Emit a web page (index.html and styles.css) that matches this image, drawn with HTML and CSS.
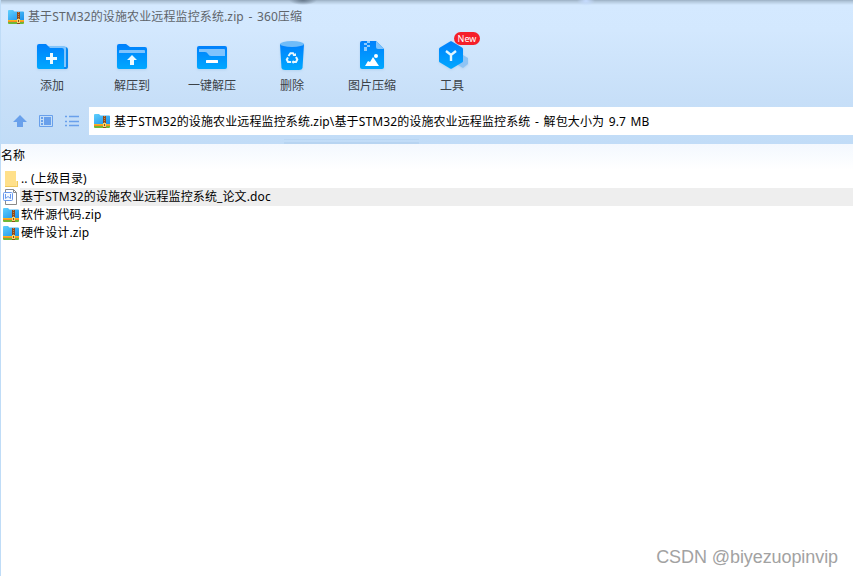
FILE: index.html
```html
<!DOCTYPE html>
<html lang="zh-CN">
<head>
<meta charset="utf-8">
<title>360压缩</title>
<link rel="stylesheet" href="styles.css">
</head>
<body>
<svg class="defs" width="0" height="0">
  <defs>
    <linearGradient id="blue" x1="0" y1="0" x2="0" y2="1"><stop offset="0" stop-color="#0080fc"/><stop offset="1" stop-color="#00a8ff"/></linearGradient>
    <linearGradient id="sky" x1="0" y1="0" x2="1" y2="1"><stop offset="0" stop-color="#5fd0fd"/><stop offset="1" stop-color="#1c90ea"/></linearGradient>
    <symbol id="zip" viewBox="0 0 16 14">
      <path d="M0 1Q0 0 1 0H5L6.500 1.500H15Q16 1.500 16 2.500V10H0Z" fill="url(#sky)"/>
      <path d="M0 10H16V12H0Z" fill="#f9b51d"/>
      <path d="M0 12H16V13Q16 14 15 14H1Q0 14 0 13Z" fill="#70b735"/>
      <path d="M0 11H16V12H0Z" fill="#f98a24"/>
      <path d="M9 2H12V14H9Z" fill="#8e4a1d"/>
      <path d="M10.500 2V9" stroke="#c98942" stroke-dasharray="1 1"/>
      <path d="M9 9H12V13H9Z" fill="#f8d56c"/><path d="M10 10H11V12H10Z" fill="#81501c"/>
    </symbol>
  </defs>
</svg>
<div class="window">
  <header class="chrome">
    <div class="titlebar"><svg class="zip"><use href="#zip"/></svg><span class="title">基于STM32的设施农业远程监控系统.zip - 360压缩</span></div>
    <nav class="toolbar">
      <div class="tool"><svg width="36" height="34" viewBox="0 0 36 34"><path d="M13 7H31Q34 7 34 10V27Q34 29 32 29H11Z" fill="#0888f0"/><path d="M14 6H30Q32 6 32 8V27H14Z" fill="#82c5fc"/><path d="M3 6Q3 4 5 4H12L16 8H28Q30 8 30 10V29H5Q3 29 3 27Z" fill="url(#blue)"/><path d="M17.500 13V24M12 18.500H23" stroke="#edfaff" stroke-width="3"/></svg><span>添加</span></div>
      <div class="tool"><svg width="36" height="34" viewBox="0 0 36 34"><path d="M3 6Q3 4 5 4H12L16 7H31Q33 7 33 9V27Q33 29 31 29H5Q3 29 3 27Z" fill="url(#blue)"/><path d="M5 13V11Q5 10 6 10H30Q31 10 31 11V13Z" fill="#7fc3fd"/><path d="M18 15L23 20H20V25H16V20H13Z" fill="#edfaff"/></svg><span>解压到</span></div>
      <div class="tool"><svg width="36" height="34" viewBox="0 0 36 34"><rect x="3" y="6" width="30" height="23" rx="2" fill="url(#blue)"/><path d="M5 9H30Q31 9 31 10V16H17Q15 16 14 14Q13 12 11 12H5Z" fill="#7fc3fd"/><rect x="12" y="20" width="12" height="3" rx=".5" fill="#fff"/></svg><span>一键解压</span></div>
      <div class="tool"><svg width="36" height="34" viewBox="0 0 36 34"><path d="M6 4H30L28.500 28Q28 30 25 30H11Q8 30 7.500 28Z" fill="url(#blue)"/><ellipse cx="18" cy="4" rx="12" ry="3" fill="#70bcf9"/><g fill="none" stroke="#e8f8ff" stroke-width="2"><path d="M14.500 16L16.500 13.200H19L20.500 15.500"/><path d="M22 17L23.300 19.500L22 22H19"/><path d="M17 22H14L12.800 19.500L14 17.500"/></g><path d="M18.500 16H22V13ZM19.500 20V24L17.500 22Z" fill="#e8f8ff"/></svg><span>删除</span></div>
      <div class="tool"><svg width="36" height="34" viewBox="0 0 36 34"><path d="M6 3Q6 1 8 1H22L30 9V27Q30 29 28 29H8Q6 29 6 27Z" fill="url(#blue)"/><path d="M22 1L30 9H24Q22 9 22 7Z" fill="#7fc3fd"/><path d="M13 1H16V3H13ZM10 3H13V5H10ZM13 5H16V7H13ZM10 7H13V9H10ZM10 9H13V11H10Z" fill="#8bcaff"/><path d="M11 26L14 21L16 22L19 17L25 26Z" fill="#fff"/><circle cx="22" cy="16" r="2" fill="#fff"/></svg><span>图片压缩</span></div>
      <div class="tool"><svg width="36" height="34" viewBox="0 0 36 34"><path d="M29 15L34 18V24L29 28L24 25V18Z" fill="#8fc4f4"/><path d="M16.500 1.300Q17 1 17.500 1.300L28 7.500Q29 8 29 9V21Q29 22 28 22.500L18 28.600Q17 29 16 28.600L6 22.500Q5 22 5 21V9Q5 8 6 7.500Z" fill="url(#blue)"/><path d="M12 11L17 15L22 11M17 15V21" fill="none" stroke="#dff5ff" stroke-width="2.400"/></svg><span>工具</span><b class="badge">New</b></div>
    </nav>
    <div class="navigation">
      <div class="controls">
        <svg width="14" height="14" viewBox="0 0 14 14"><path d="M7 1L14 8H10V13H4V8H0Z" fill="#69a0eb"/></svg>
        <svg width="14" height="14" viewBox="0 0 14 14"><path d="M.5 1.500H13.500V12.500H.5Z" fill="none" stroke="#69a0eb"/><path d="M5 3H12V11H5ZM2 3H4V5H2ZM2 6H4V8H2ZM2 9H4V11H2Z" fill="#69a0eb"/></svg>
        <svg width="14" height="14" viewBox="0 0 14 14"><path d="M0 2.500H2M4 2.500H14M0 7.500H2M4 7.500H14M0 11.500H2M4 11.500H14" stroke="#69a0eb" stroke-width="1.300"/></svg>
      </div>
      <div class="address"><svg class="zip"><use href="#zip"/></svg><span class="path">基于STM32的设施农业远程监控系统.zip\基于STM32的设施农业远程监控系统 - 解包大小为 9.7 MB</span></div>
    </div>
  </header>
  <main>
    <div class="heading">名称</div>
    <div class="row"><svg class="file" width="16" height="16" viewBox="0 0 16 16"><path d="M2 0H13V10H15V16H2Z" fill="#efc95e"/><path d="M2 0H13V15H2Z" fill="#ffe08a"/><path d="M13 10H14V15H13Z" fill="#ffe69c"/></svg><span class="parent">.. (上级目录)</span></div>
    <div class="row selected"><svg class="file" width="16" height="16" viewBox="0 0 16 16"><path d="M2.500 .5H10.500L13.500 3.500V15.500H2.500Z" fill="#fff" stroke="#8a8a8a"/><path d="M10.500 .5V3.500H13.500" fill="none" stroke="#8a8a8a"/><rect x=".5" y="3.500" width="9" height="8" rx="1" fill="#f5faff" stroke="#6999ed"/><path d="M2.500 5V9.500L5 7.500L7.500 9.500V5" fill="none" stroke="#6999ed"/></svg><span class="doc">基于STM32的设施农业远程监控系统_论文.doc</span></div>
    <div class="row"><svg class="zip file"><use href="#zip"/></svg><span class="source">软件源代码.zip</span></div>
    <div class="row"><svg class="zip file"><use href="#zip"/></svg><span class="hardware">硬件设计.zip</span></div>
  </main>
  <div class="watermark">CSDN @biyezuopinvip</div>
</div>
</body>
</html>
```
FILE: styles.css
```css
* { box-sizing: border-box; }
body { margin: 0; overflow: hidden; font: 12px/18px "Noto Sans", "Noto Sans CJK SC", sans-serif; color: #000; letter-spacing: .12px; }
svg { display: block; flex: none; }
.defs { position: absolute; }
.window { position: relative; height: 576px; background: #fff; border-left: 1px solid #bfdcf7; }
.chrome { height: 144px; background: linear-gradient(#b7d4f1, #b7d4f1) 283px 142px / 135px 2px no-repeat, linear-gradient(#b9d6f3, #b9d6f3) 283px 139px / 135px 1px no-repeat, radial-gradient(ellipse 14px 5px at 302px 0, #65778a, transparent), radial-gradient(ellipse 9px 5px at 585px 1px, #c6dcff, transparent), linear-gradient(#98acc0 0, #acc1d5 1px, #d4e9ff 5px, #d3e8fe 30px, #c7dff8 100px, #c1dcf7 144px); }
.titlebar { height: 31px; padding: 2px 0 0 7px; display: flex; align-items: center; color: #5f656b; }
.zip { width: 16px; height: 14px; }
.title { margin-left: 4px; word-spacing: 1.3px; }
.toolbar { height: 76px; padding-left: 11px; display: flex; }
.tool { position: relative; width: 80px; padding-top: 9px; display: flex; flex-direction: column; align-items: center; color: #3c4248; letter-spacing: 0; }
.tool svg { filter: drop-shadow(0 1px 1px #b4d3f0); }
.tool span { margin-top: 3px; }
.badge { position: absolute; left: 42px; top: 1px; width: 26px; height: 13px; border-radius: 7px; background: #f51f29; color: #fff; font: 9px/13px "Noto Sans", sans-serif; text-align: center; }
.navigation { display: flex; height: 28px; }
.controls { width: 88px; padding-left: 12px; display: flex; gap: 12px; align-items: center; }
.address { flex: 1; display: flex; align-items: center; background: #fff; padding-left: 5px; }
.path { margin: 2px 0 0 4px; word-spacing: 1.3px; }
.title, .path, .row span { white-space: nowrap; }
.heading { height: 26px; padding-top: 3px; background: linear-gradient(#f3f8fe, #fff); }
.row { height: 18px; display: flex; align-items: center; padding-left: 2px; }
.row .file { margin-top: -1px; }
.row span { height: 18px; padding-left: 2px; }
.selected { background: linear-gradient(#eee, #eee) 19px 0 no-repeat; }
.watermark { position: absolute; right: 15px; bottom: 7px; font: 18px/24px "Liberation Sans", sans-serif; letter-spacing: -.08px; color: #a2a2a2; white-space: nowrap; }
```
